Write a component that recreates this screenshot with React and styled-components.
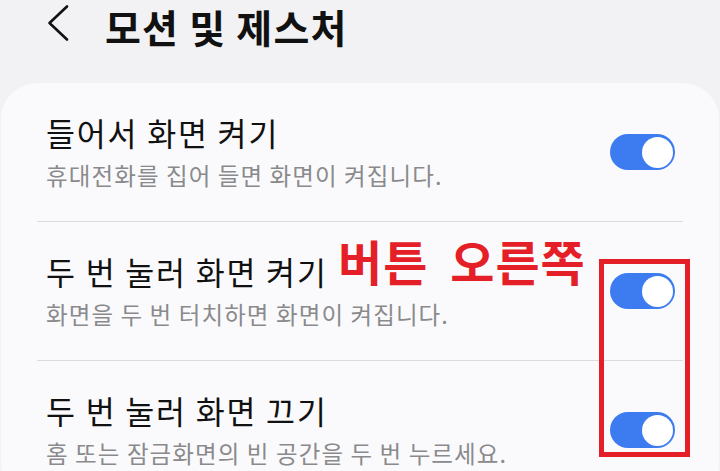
import React from "react";
import styled, { createGlobalStyle } from "styled-components";

const Global = createGlobalStyle`
  html, body { margin: 0; padding: 0; background: #f2f2f4; }
  body { font-family: "Noto Sans CJK KR", "Noto Sans", sans-serif; overflow: hidden; }
  * { box-sizing: border-box; }
`;

const Page = styled.div`
  position: relative;
  width: 720px;
  height: 471px;
  overflow: hidden;
  background: #f2f2f4;
`;

const Header = styled.header`
  display: flex;
  align-items: center;
  height: 83px;
  padding: 0 0 31px 46px;
`;

const BackButton = styled.button`
  display: flex;
  align-items: center;
  justify-content: center;
  width: 24px;
  height: 40px;
  padding: 0;
  margin: -6px 35px 0 0;
  border: none;
  background: transparent;
`;

const Title = styled.h1`
  margin: 0;
  font-size: 39px;
  line-height: 46px;
  font-weight: 700;
  color: #111;
  letter-spacing: 1.2px;
  white-space: nowrap;
`;

const Card = styled.section`
  margin: 0 1px;
  background: #fafafc;
  border-radius: 36px;
  padding: 0 36px;
`;

const Row = styled.div`
  display: flex;
  align-items: center;
  justify-content: space-between;
  height: ${(p) => (p.$first ? 138 : 139)}px;
  padding: 0 8px 0 9px;
  border-top: ${(p) => (p.$first ? "none" : "1px solid #dcdcde")};
`;

const TextBlock = styled.div`
  display: flex;
  flex-direction: column;
  padding-bottom: 2px;
`;

const RowTitle = styled.div`
  font-size: 31.5px;
  line-height: 40px;
  color: #111;
  white-space: nowrap;
  letter-spacing: 1.8px;
`;

const RowSub = styled.div`
  margin-top: 7px;
  font-size: 23.5px;
  line-height: 32px;
  color: #8a8a8c;
  white-space: nowrap;
  letter-spacing: 1.1px;
`;

const Switch = styled.div`
  position: relative;
  flex: none;
  width: 65px;
  height: 36px;
  border-radius: 18px;
  background: #3d7bf0;
  display: flex;
  align-items: center;
  justify-content: ${(p) => (p.$on ? "flex-end" : "flex-start")};
  padding: 0 2.5px;
`;

const Knob = styled.span`
  width: 31px;
  height: 31px;
  border-radius: 50%;
  background: #fff;
`;

const Annotation = styled.div`
  position: absolute;
  left: 338px;
  top: 234px;
  font-size: 48px;
  line-height: 52px;
  font-weight: 700;
  color: #e41f27;
  white-space: nowrap;
  letter-spacing: 1px;
  word-spacing: 10px;
`;

const Highlight = styled.div`
  position: absolute;
  left: 599px;
  top: 259px;
  width: 91px;
  height: 198px;
  border: 5px solid #e41f27;
`;

const items = [
  { title: "들어서 화면 켜기", sub: "휴대전화를 집어 들면 화면이 켜집니다." },
  { title: "두 번 눌러 화면 켜기", sub: "화면을 두 번 터치하면 화면이 켜집니다." },
  { title: "두 번 눌러 화면 끄기", sub: "홈 또는 잠금화면의 빈 공간을 두 번 누르세요." },
];

export default function App() {
  return (
    <Page>
      <Global />
      <Header>
        <BackButton aria-label="back">
          <svg width="24" height="40" viewBox="0 0 24 40">
            <polyline
              points="21,3.5 3.5,20 21,36.5"
              fill="none"
              stroke="#111"
              strokeWidth="2.6"
              strokeLinecap="round"
              strokeLinejoin="round"
            />
          </svg>
        </BackButton>
        <Title>모션 및 제스처</Title>
      </Header>
      <Card>
        {items.map((it, i) => (
          <Row key={i} $first={i === 0}>
            <TextBlock>
              <RowTitle>{it.title}</RowTitle>
              <RowSub>{it.sub}</RowSub>
            </TextBlock>
            <Switch $on>
              <Knob />
            </Switch>
          </Row>
        ))}
      </Card>
      <Annotation>버튼 오른쪽</Annotation>
      <Highlight />
    </Page>
  );
}
